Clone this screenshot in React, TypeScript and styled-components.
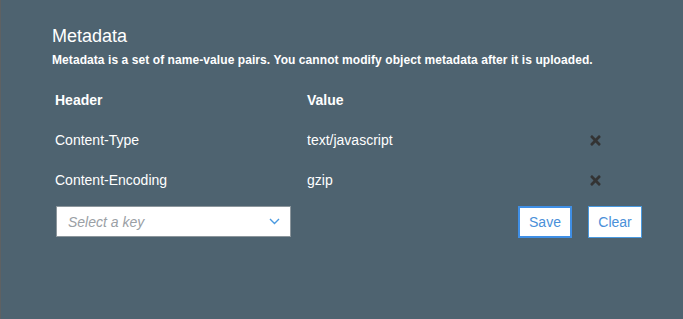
import { ReactElement, Fragment } from "react";
import styled, { createGlobalStyle } from "styled-components";
import { FaTimes } from "react-icons/fa";

const GlobalStyle = createGlobalStyle`
    html, body {
        margin: 0;
        padding: 0;
        background: #4e6370;
    }
    body {
        font-family: "Liberation Sans", Arial, sans-serif;
    }
`;

const Page = styled.div`
    box-sizing: border-box;
    height: 319px;
    border-left: 1px solid #5e6163;
    padding: 24px 0 0 51px;
    color: #ffffff;
`;

const Panel = styled.div`
    width: 594px;
`;

const Title = styled.h2`
    margin: 0;
    font-size: 18px;
    font-weight: normal;
    line-height: 24px;
`;

const Description = styled.p`
    margin: 4px 0 0;
    font-size: 12px;
    font-weight: bold;
    line-height: 16px;
    letter-spacing: 0.075px;
`;

const Table = styled.div`
    margin-top: 12px;
    display: grid;
    grid-template-columns: 252px 281px 1fr;
    padding-left: 3px;
`;

const Cell = styled.div<{ $head?: boolean }>`
    height: 40px;
    display: flex;
    align-items: center;
    font-size: 14px;
    font-weight: ${(p) => (p.$head ? "bold" : "normal")};
`;

const RemoveCell = styled.div`
    height: 40px;
    display: flex;
    align-items: center;
    color: #333333;
    font-size: 15px;
    cursor: pointer;
`;

const FormRow = styled.div`
    display: flex;
    align-items: flex-start;
    margin-top: 6px;
    padding-left: 4px;
`;

const Select = styled.div`
    box-sizing: border-box;
    width: 235px;
    height: 31px;
    background: #ffffff;
    border: 1px solid #8c969c;
    display: flex;
    align-items: center;
    justify-content: space-between;
    padding: 0 10px 0 11px;
`;

const Placeholder = styled.span`
    font-size: 14px;
    font-style: italic;
    color: #9aa0a5;
`;

const Actions = styled.div`
    margin-left: auto;
    display: flex;
    gap: 16px;
    margin-right: 4px;
`;

const Button = styled.button<{ $focused?: boolean }>`
    box-sizing: border-box;
    width: 54px;
    height: 32px;
    background: #ffffff;
    border: ${(p) => (p.$focused ? "2px solid #3f8fe6" : "1px solid #4a9ae0")};
    color: #4a90d9;
    font-family: "Liberation Sans", Arial, sans-serif;
    font-size: 14px;
    padding: 0;
    cursor: pointer;
`;

const rows = [
    { key: "Content-Type", value: "text/javascript" },
    { key: "Content-Encoding", value: "gzip" },
];

function Chevron(): ReactElement {
    return (
        <svg width="11" height="7" viewBox="0 0 11 7">
            <path d="M1 1 L5.5 5.5 L10 1" fill="none" stroke="#4a9ae0" strokeWidth="1.4" />
        </svg>
    );
}

export default function App(): ReactElement {
    return (
        <>
            <GlobalStyle />
            <Page>
                <Panel>
                    <Title>Metadata</Title>
                    <Description>
                        Metadata is a set of name-value pairs. You cannot modify object metadata after it is uploaded.
                    </Description>
                    <Table>
                        <Cell $head>Header</Cell>
                        <Cell $head>Value</Cell>
                        <RemoveCell />
                        {rows.map((row) => (
                            <Fragment key={row.key}>
                                <Cell>{row.key}</Cell>
                                <Cell>{row.value}</Cell>
                                <RemoveCell>
                                    <FaTimes />
                                </RemoveCell>
                            </Fragment>
                        ))}
                    </Table>
                    <FormRow>
                        <Select>
                            <Placeholder>Select a key</Placeholder>
                            <Chevron />
                        </Select>
                        <Actions>
                            <Button $focused>Save</Button>
                            <Button>Clear</Button>
                        </Actions>
                    </FormRow>
                </Panel>
            </Page>
        </>
    );
}
